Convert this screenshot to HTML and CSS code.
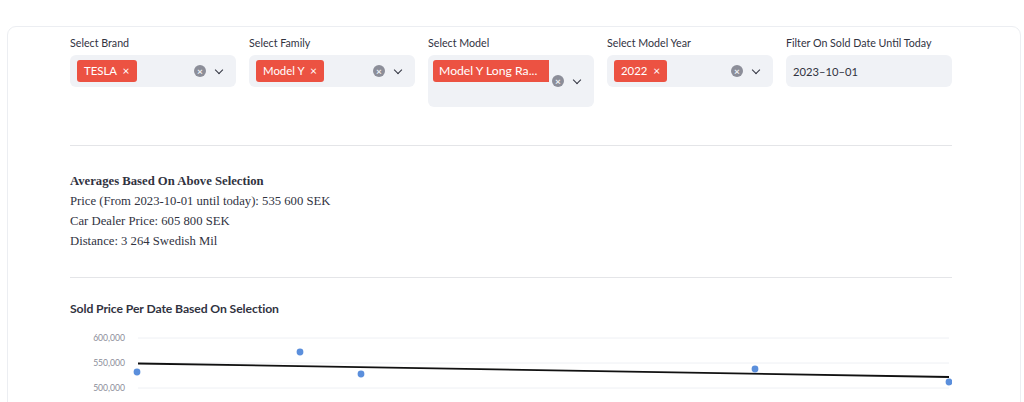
FILE: index.html
```html
<!DOCTYPE html>
<html lang="en">
<head>
  <meta charset="UTF-8" />
  <title>Sold Cars</title>
  <link rel="stylesheet" href="styles.css">
</head>
<body>
  <div class="card">
    <div class="content">
      <div class="filters">
        <div class="field">
          <div class="label">Select Brand</div>
          <div class="box">
            <div class="tags"><span class="tag">TESLA <span class="x">&times;</span></span></div>
            <div class="icons"><span class="clear">&times;</span><span class="chev"></span></div>
          </div>
        </div>
        <div class="field">
          <div class="label">Select Family</div>
          <div class="box">
            <div class="tags"><span class="tag">Model Y <span class="x">&times;</span></span></div>
            <div class="icons"><span class="clear">&times;</span><span class="chev"></span></div>
          </div>
        </div>
        <div class="field">
          <div class="label">Select Model</div>
          <div class="box tall">
            <div class="tags"><span class="tag long">Model Y Long Ra...</span></div>
            <div class="icons"><span class="clear">&times;</span><span class="chev"></span></div>
          </div>
        </div>
        <div class="field">
          <div class="label">Select Model Year</div>
          <div class="box">
            <div class="tags"><span class="tag">2022 <span class="x">&times;</span></span></div>
            <div class="icons"><span class="clear">&times;</span><span class="chev"></span></div>
          </div>
        </div>
        <div class="field">
          <div class="label">Filter On Sold Date Until Today</div>
          <div class="box date">2023&ndash;10&ndash;01</div>
        </div>
      </div>

      <div class="divider first"></div>

      <div class="averages">
        <div class="avg-title">Averages Based On Above Selection</div>
        <div>Price (From 2023-10-01 until today): 535 600 SEK</div>
        <div>Car Dealer Price: 605 800 SEK</div>
        <div>Distance: 3 264 Swedish Mil</div>
      </div>

      <div class="divider"></div>

      <div class="chart-title">Sold Price Per Date Based On Selection</div>
      <svg class="chart" width="882" height="80" viewBox="0 0 882 80">
        <g class="grid">
          <line x1="68" y1="13" x2="879" y2="13" />
          <line x1="68" y1="38" x2="879" y2="38" />
          <line x1="68" y1="63" x2="879" y2="63" />
        </g>
        <g class="axis">
          <text x="55" y="16">600,000</text>
          <text x="55" y="41">550,000</text>
          <text x="55" y="66">500,000</text>
        </g>
        <line class="trend" x1="68" y1="38.5" x2="879" y2="52" />
        <g class="dots">
          <circle cx="67" cy="47" r="3.4" />
          <circle cx="230" cy="27" r="3.4" />
          <circle cx="291" cy="49" r="3.4" />
          <circle cx="685" cy="44" r="3.4" />
          <circle cx="879" cy="57" r="3.4" />
        </g>
      </svg>
    </div>
  </div>
</body>
</html>
```

FILE: styles.css
```css
body { margin: 0; background: white; overflow: hidden; font-family: "Lato", "Noto Sans", sans-serif; color: #31333f; }

.card {
  width: 1014px; height: 420px; margin: 26px 0 0 7px; box-sizing: border-box;
  border: 1px solid #eceef2; border-radius: 9px; padding-top: 8px;
}
.content { width: 882px; margin-left: 62px; }

.filters { display: grid; grid-template-columns: repeat(5, 166px); gap: 13px; align-items: start; }
.label { font-size: 10.7px; line-height: 16px; height: 16px; margin-bottom: 4px; }

.box {
  height: 32px; box-sizing: border-box; background: #f0f2f6; border-radius: 6px;
  display: flex; align-items: center; padding-left: 7px;
}
.box.tall { height: 52px; align-items: flex-start; padding-left: 5px; }
.box.tall .tags { padding-top: 5px; }
.box.tall .icons { align-self: center; padding-top: 0; }
.tags { flex: 1; display: flex; }
.tag {
  background: #ec5242; color: white; font-size: 11.4px; line-height: 22px; height: 22px;
  padding: 0 7px; border-radius: 3px; white-space: nowrap;
}
.tag .x { margin-left: 3px; font-size: 12px; }
.tag.long {
  width: 116px; box-sizing: border-box; padding: 0 6px; border-radius: 3px 0 0 3px;
  overflow: hidden; font-size: 12.2px;
}

.icons { display: flex; align-items: center; gap: 7px; padding-right: 11px; }
.clear {
  width: 12px; height: 12px; border-radius: 50%; background: #8c8e99; color: #f0f2f6;
  font-size: 10px; line-height: 12px; text-align: center; font-weight: 700;
}
.chev {
  width: 5px; height: 5px; border-right: 1.7px solid #31333f; border-bottom: 1.7px solid #31333f;
  transform: rotate(45deg); margin: -3px 3px 0 3px;
}
.date { font-size: 11.2px; padding-left: 7px; }

.divider { border-top: 1px solid #e4e5e8; margin-top: 26px; }
.divider.first { margin-top: 38px; }

.averages {
  font-family: "Liberation Serif", serif; font-size: 12.7px; line-height: 20px;
  margin-top: 25px;
}
.avg-title { font-weight: bold; }

.chart-title { font-size: 12.2px; font-weight: 700; line-height: 20px; margin-top: 21px; letter-spacing: -0.1px; }
.chart { display: block; margin-top: 6px; }
.grid line { stroke: #eef0f4; stroke-width: 1; }
.axis text { font-size: 8.6px; fill: #8a8d99; text-anchor: end; font-family: "Lato", sans-serif; }
.trend { stroke: #111; stroke-width: 1.8; }
.dots circle { fill: #5b8fdc; }
```
